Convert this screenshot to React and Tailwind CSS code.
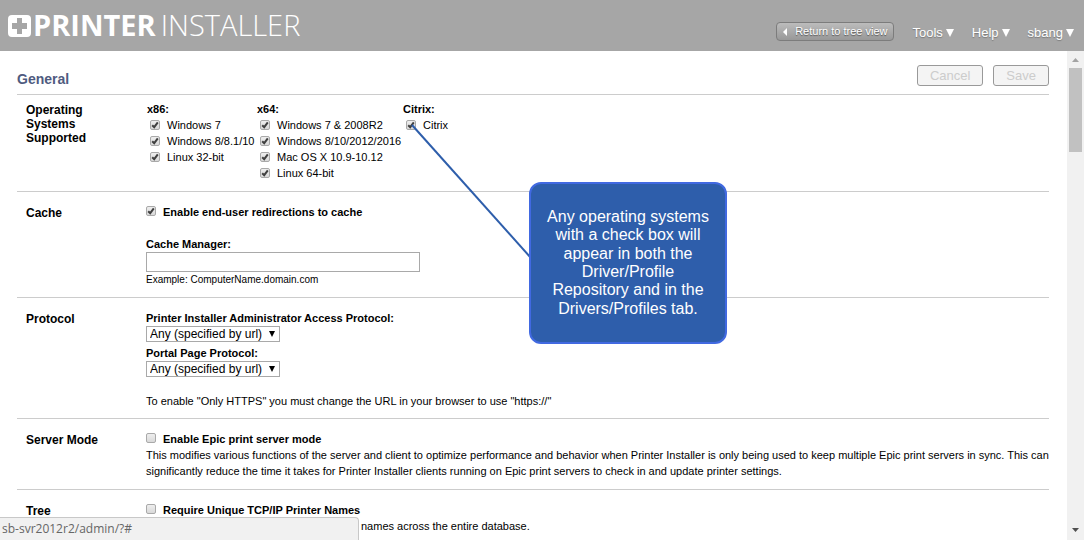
import React from "react";

function Checkbox({ id, defaultChecked = false }) {
  return (
    <span className="grid size-[10px] shrink-0">
      <input
        id={id}
        type="checkbox"
        defaultChecked={defaultChecked}
        className="peer col-start-1 row-start-1 size-[10px] appearance-none rounded-[2px] border border-[#a9a9a9] bg-linear-to-b from-[#eeeeee] to-[#d9d9d9]"
      />
      <svg
        viewBox="0 0 10 10"
        className="pointer-events-none invisible col-start-1 row-start-1 size-[10px] peer-checked:visible"
        aria-hidden="true"
      >
        <path d="M2.2 5.2 L4.2 7.2 L7.8 2.4" fill="none" stroke="#404040" strokeWidth="2" />
      </svg>
    </span>
  );
}

function OsColumn({ title, items }) {
  return (
    <fieldset className="min-w-0">
      <legend className="h-4 font-bold whitespace-nowrap">{title}</legend>
      {items.map((name) => {
        const id = `${title}${name}`.replace(/[^a-zA-Z0-9]/g, "-");
        return (
          <div key={name} className="flex h-4 items-center pl-[3px]">
            <Checkbox id={id} defaultChecked />
            <label htmlFor={id} className="pl-[7px] whitespace-nowrap">
              {name}
            </label>
          </div>
        );
      })}
    </fieldset>
  );
}

function Section({ title, className = "pt-3 pb-[10px]", children }) {
  return (
    <section className={`flex border-b border-[#cccccc] ${className}`}>
      <h2 className="w-[129px] shrink-0 pt-[2px] pr-8 pl-[9px] text-[12px] leading-[14px] font-bold">
        {title}
      </h2>
      <div className="min-w-0 flex-1 text-[11px] leading-4">{children}</div>
    </section>
  );
}

function CheckLine({ id, label, defaultChecked }) {
  return (
    <div className="flex h-4">
      <span className="pt-[2px]">
        <Checkbox id={id} defaultChecked={defaultChecked} />
      </span>
      <label htmlFor={id} className="pl-[7px] font-bold">
        {label}
      </label>
    </div>
  );
}

function ProtocolSelect({ id, label }) {
  return (
    <div>
      <label htmlFor={id} className="block font-bold">
        {label}
      </label>
      <div className="grid w-[134px] items-center">
        <select
          id={id}
          className="col-start-1 row-start-1 h-4 w-full appearance-none border border-[#a9a9a9] bg-white pl-[3px] text-[12px] leading-[14px]"
        >
          <option>Any (specified by url)</option>
        </select>
        <svg
          viewBox="0 0 8 6"
          className="pointer-events-none col-start-1 row-start-1 mr-[4px] h-[6px] w-[8px] justify-self-end"
          aria-hidden="true"
        >
          <path d="M1 0H7L4 6Z" fill="#000" />
        </svg>
      </div>
    </div>
  );
}

function Menu({ label }) {
  return (
    <button type="button" className="flex items-center gap-[3px] text-[13px] leading-4 text-white [text-shadow:0_1px_1px_#777]">
      {label}
      <svg viewBox="0 0 8 8" className="size-[8px]" aria-hidden="true">
        <path d="M0 0H8L4 8Z" fill="#fff" />
      </svg>
    </button>
  );
}

function Header() {
  return (
    <header className="mr-px flex h-[51px] shrink-0 items-start justify-between bg-[#a6a6a6] pr-[10px] pl-2">
      <div className="flex h-[51px] items-center gap-[2px] text-white">
        <svg viewBox="0 0 23 22" className="h-[22px] w-[23px]" aria-hidden="true">
          <path
            fillRule="evenodd"
            fill="#fff"
            d="M4 0H19Q23 0 23 4V18Q23 22 19 22H4Q0 22 0 18V4Q0 0 4 0ZM9 3V8H4V14H9V19H14V14H19V8H14V3Z"
          />
          <path d="M10 4H13V9H18V13H13V18H10V13H5V9H10Z" fill="#a6a6a6" />
        </svg>
        <span className="flex items-baseline gap-[5px] pb-[2px] font-['Open_Sans',sans-serif] text-[29px] leading-8">
          <span className="font-bold">PRINTER</span>
          <span className="font-light">INSTALLER</span>
        </span>
      </div>
      <div className="flex items-start gap-[18px] pt-[22px]">
        <button
          type="button"
          className="flex h-[19px] items-center gap-[8px] rounded-[4px] border border-[#7c7c7c] bg-linear-to-b from-[#bcbcbc] to-[#989898] px-[6px] text-[11px] font-normal text-white [text-shadow:0_1px_1px_#555]"
        >
          <svg viewBox="0 0 4 8" className="h-[8px] w-[4px]" aria-hidden="true">
            <path d="M4 0V8L0 4Z" fill="#fff" />
          </svg>
          Return to tree view
        </button>
        <nav className="flex items-center gap-[18px] pt-[3px]">
          <Menu label="Tools" />
          <Menu label="Help" />
          <Menu label="sbang" />
        </nav>
      </div>
    </header>
  );
}

function FormButton({ children }) {
  return (
    <button
      type="button"
      disabled
      className="h-[21px] rounded-[3px] border border-[#999999] bg-[#f4f4f4] px-3 text-[13px] leading-[17px] text-[#cccccc]"
    >
      {children}
    </button>
  );
}

function Scrollbar() {
  return (
    <div className="mr-px flex w-[17px] shrink-0 flex-col items-center bg-[#f1f1f1]" aria-hidden="true">
      <svg viewBox="0 0 17 17" className="size-[17px] shrink-0">
        <path d="M5 11H12L8.5 7Z" fill="#a3a3a3" />
      </svg>
      <div className="h-[84px] w-[13px] bg-[#c1c1c1]" />
      <svg viewBox="0 0 17 17" className="mt-auto size-[17px] shrink-0">
        <path d="M5 5H12L8.5 9Z" fill="#505050" />
      </svg>
    </div>
  );
}

function Callout() {
  return (
    <>
      <svg className="pointer-events-none absolute top-[124px] left-[411px] h-[135px] w-[120px]" aria-hidden="true">
        <path d="M1 1L120 134" stroke="#2e5eab" strokeWidth="2" fill="none" />
      </svg>
      <div
        role="note"
        className="absolute top-[182px] left-[529px] flex h-[162px] w-[198px] items-center justify-center rounded-[12px] border-2 border-[#4169e1] bg-[#2e5eab] px-[14px] text-center text-[16px] leading-[115%] text-white"
      >
        Any operating systems with a check box will appear in both the Driver/Profile Repository and in the
        Drivers/Profiles tab.
      </div>
    </>
  );
}

export default function App() {
  return (
    <div className="relative flex h-screen flex-col overflow-hidden bg-white font-['Liberation_Sans',Arial,sans-serif] text-black">
      <Header />
      <div className="flex min-h-0 flex-1">
        <main className="min-w-0 flex-1 overflow-hidden pr-[18px] pl-[17px]">
          <div className="flex justify-between border-b border-[#cccccc] pt-[14px] pb-[7px]">
            <h1 className="pt-[6px] text-[14px] leading-4 font-bold text-[#4f5b80]">General</h1>
            <div className="flex gap-[10px]">
              <FormButton>Cancel</FormButton>
              <FormButton>Save</FormButton>
            </div>
          </div>

          <Section title="Operating Systems Supported" className="pt-[6px] pb-[10px]">
            <div className="grid grid-cols-[110px_146px_auto] pl-px">
              <OsColumn title="x86:" items={["Windows 7", "Windows 8/8.1/10", "Linux 32-bit"]} />
              <OsColumn
                title="x64:"
                items={["Windows 7 & 2008R2", "Windows 8/10/2012/2016", "Mac OS X 10.9-10.12", "Linux 64-bit"]}
              />
              <OsColumn title="Citrix:" items={["Citrix"]} />
            </div>
          </Section>

          <Section title="Cache" className="pt-3 pb-[9px]">
            <CheckLine id="cache-redirect" label="Enable end-user redirections to cache" defaultChecked />
            <label htmlFor="cache-manager" className="mt-4 block font-bold">
              Cache Manager:
            </label>
            <input
              id="cache-manager"
              type="text"
              className="block h-5 w-[274px] border border-[#a9a9a9] bg-white px-1"
            />
            <p className="text-[10px] leading-4">Example: ComputerName.domain.com</p>
          </Section>

          <Section title="Protocol" className="pt-3 pb-[9px]">
            <div className="flex flex-col gap-[3px]">
              <ProtocolSelect id="admin-protocol" label="Printer Installer Administrator Access Protocol:" />
              <ProtocolSelect id="portal-protocol" label="Portal Page Protocol:" />
            </div>
            <p className="mt-4">To enable "Only HTTPS" you must change the URL in your browser to use "https://"</p>
          </Section>

          <Section title="Server Mode">
            <CheckLine id="epic-mode" label="Enable Epic print server mode" />
            <p>
              This modifies various functions of the server and client to optimize performance and behavior when
              Printer Installer is only being used to keep multiple Epic print servers in sync. This can
              significantly reduce the time it takes for Printer Installer clients running on Epic print servers to
              check in and update printer settings.
            </p>
          </Section>

          <Section title="Tree">
            <CheckLine id="unique-names" label="Require Unique TCP/IP Printer Names" />
            <p className="pl-[215px]">names across the entire database.</p>
          </Section>
        </main>
        <Scrollbar />
      </div>

      <Callout />
      <div className="absolute bottom-0 left-0 h-[23px] w-[359px] rounded-tr-[4px] border-t border-r border-[#c8c8c8] bg-[#f1f1f1] pl-[2px] font-['Open_Sans',sans-serif] text-[12px] leading-[22px] text-[#666666]">
        sb-svr2012r2/admin/?#
      </div>
    </div>
  );
}
